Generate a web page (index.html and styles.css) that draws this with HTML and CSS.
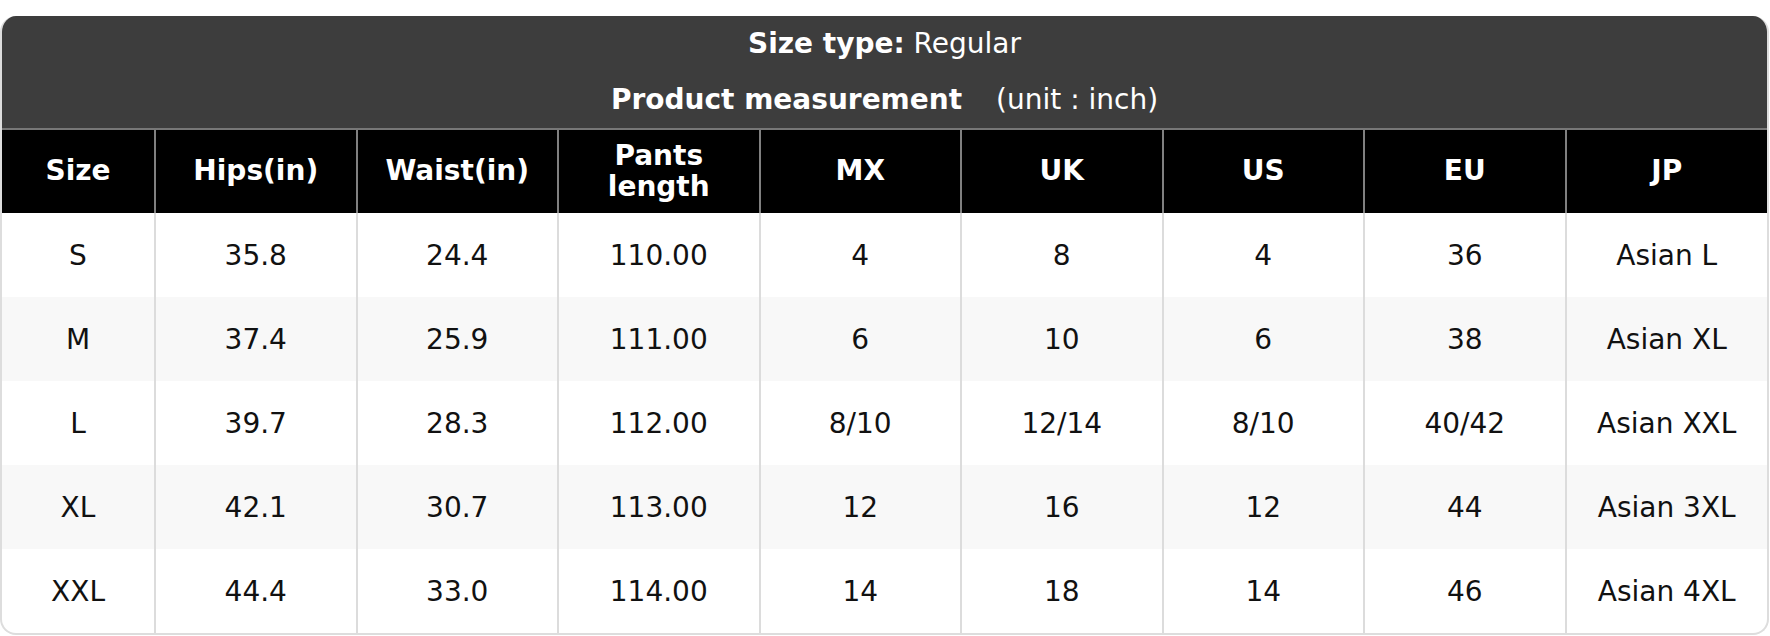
FILE: index.html
```html
<!DOCTYPE html>
<html lang="en">
<head>
<meta charset="utf-8">
<title>Size chart</title>
<link rel="stylesheet" href="styles.css">
</head>
<body>
<div class="card">
  <div class="title">
    <div class="title-line"><span class="strong">Size type:</span> Regular</div>
    <div class="title-line"><span class="strong">Product measurement</span><span class="unit">(unit : inch)</span></div>
  </div>
  <table class="chart">
    <colgroup>
      <col class="col-size">
      <col><col><col><col><col><col><col><col>
    </colgroup>
    <thead>
      <tr>
        <th>Size</th>
        <th>Hips(in)</th>
        <th>Waist(in)</th>
        <th>Pants length</th>
        <th>MX</th>
        <th>UK</th>
        <th>US</th>
        <th>EU</th>
        <th>JP</th>
      </tr>
    </thead>
    <tbody>
      <tr><td>S</td><td>35.8</td><td>24.4</td><td>110.00</td><td>4</td><td>8</td><td>4</td><td>36</td><td>Asian L</td></tr>
      <tr class="alt"><td>M</td><td>37.4</td><td>25.9</td><td>111.00</td><td>6</td><td>10</td><td>6</td><td>38</td><td>Asian XL</td></tr>
      <tr><td>L</td><td>39.7</td><td>28.3</td><td>112.00</td><td>8/10</td><td>12/14</td><td>8/10</td><td>40/42</td><td>Asian XXL</td></tr>
      <tr class="alt"><td>XL</td><td>42.1</td><td>30.7</td><td>113.00</td><td>12</td><td>16</td><td>12</td><td>44</td><td>Asian 3XL</td></tr>
      <tr><td>XXL</td><td>44.4</td><td>33.0</td><td>114.00</td><td>14</td><td>18</td><td>14</td><td>46</td><td>Asian 4XL</td></tr>
    </tbody>
  </table>
</div>
</body>
</html>
```

FILE: styles.css
```css
html, body {
  margin: 0;
  padding: 0;
  background: #ffffff;
}

body {
  padding-top: 16px;
  font-family: "DejaVu Sans", Verdana, sans-serif;
  font-size: 28px;
  color: #111111;
}

.card {
  width: 1769px;
  box-sizing: border-box;
  border: 2px solid #dddddd;
  border-top: none;
  border-radius: 16px;
  overflow: hidden;
}

.title {
  background: #3d3d3d;
  color: #ffffff;
  height: 112px;
  display: flex;
  flex-direction: column;
  justify-content: center;
  text-align: center;
}

.title-line {
  line-height: 56px;
}

.strong {
  font-weight: bold;
}

.unit {
  margin-left: 34px;
}

.chart {
  width: 100%;
  border-collapse: collapse;
  table-layout: fixed;
}

.col-size {
  width: 153px;
}

.chart th {
  background: #000000;
  color: #ffffff;
  font-weight: bold;
  line-height: 1.1;
  height: 83px;
  padding: 0 8px;
  border-top: 2px solid #777777;
  border-left: 2px solid #808080;
  vertical-align: middle;
  text-align: center;
}

.chart td {
  height: 84px;
  padding: 0 8px;
  text-align: center;
  vertical-align: middle;
  border-left: 2px solid #dcdcdc;
}

.chart th:first-child,
.chart td:first-child {
  border-left: none;
}

.chart tr.alt td {
  background: #f8f8f8;
}
```
